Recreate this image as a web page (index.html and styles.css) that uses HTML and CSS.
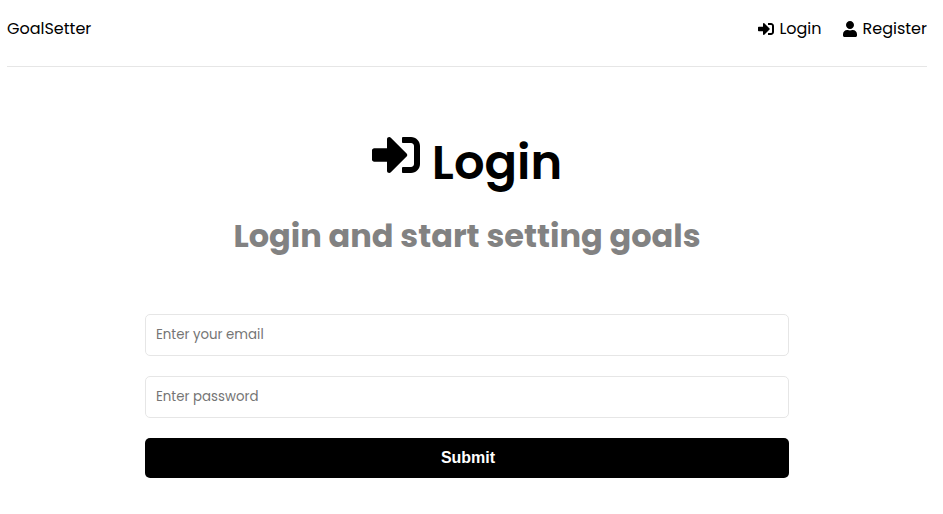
FILE: index.html
```html
<!DOCTYPE html>
<html lang="en">
<head>
<meta charset="utf-8">
<title>GoalSetter</title>
<link rel="stylesheet" href="styles.css">
</head>
<body>
<svg class="sprite" aria-hidden="true">
<symbol id="sign-in" viewBox="0 0 512 512"><path d="M416 448h-84c-6.600 0-12-5.400-12-12v-40c0-6.600 5.400-12 12-12h84c17.700 0 32-14.300 32-32V160c0-17.700-14.300-32-32-32h-84c-6.600 0-12-5.400-12-12V76c0-6.600 5.400-12 12-12h84c53 0 96 43 96 96v192c0 53-43 96-96 96zm-47-209L201 71c-15-15-41-4.500-41 17v96H24c-13.300 0-24 10.700-24 24v96c0 13.300 10.700 24 24 24h136v96c0 21.500 26 32 41 17l168-168c9.300-9.400 9.300-24.600 0-34z"/></symbol>
<symbol id="user" viewBox="0 0 448 512"><path d="M224 256c70.700 0 128-57.300 128-128S294.700 0 224 0 96 57.300 96 128s57.300 128 128 128zm89.600 32h-16.700c-22.200 10.200-46.900 16-72.900 16s-50.600-5.800-72.900-16h-16.700C60.200 288 0 348.200 0 422.400V464c0 26.500 21.500 48 48 48h352c26.500 0 48-21.500 48-48v-41.600c0-74.200-60.200-134.400-134.400-134.400z"/></symbol>
</svg>
<div class="container">
<header class="header">
<a class="brand" href="#">GoalSetter</a>
<nav class="nav">
<a class="link login" href="#"><svg class="icon"><use href="#sign-in"/></svg><span>Login</span></a>
<a class="link register" href="#"><svg class="icon"><use href="#user"/></svg><span>Register</span></a>
</nav>
</header>
<section class="heading">
<h1 class="title"><svg class="title-icon"><use href="#sign-in"/></svg><span class="title-text">Login</span></h1>
<p class="subtitle"><span class="subtitle-text">Login and start setting goals</span></p>
</section>
<form class="form">
<input class="field" type="email" placeholder="Enter your email">
<input class="field" type="password" placeholder="Enter password">
<button class="submit" type="button">Submit</button>
</form>
</div>
</body>
</html>
```
FILE: styles.css
```css
* { box-sizing: border-box; margin: 0; padding: 0; }
body { background: #fff; color: #000; font-family: Poppins, "Open Sans", sans-serif; overflow: hidden; }
.sprite { display: none; }
.container { width: 920px; margin-left: 7px; }
.header { display: flex; justify-content: space-between; height: 67px; padding-top: 17px; border-bottom: 1px solid #e6e6e6; margin-bottom: 60px; }
a { color: #000; text-decoration: none; font-size: 16px; line-height: 24px; height: 24px; }
.nav { display: flex; gap: 20px; }
.link { display: flex; align-items: center; gap: 5px; }
.icon { width: 16px; height: 16px; fill: #000; }
.heading { height: 187px; text-align: center; }
.title { display: flex; justify-content: center; height: 72px; font-size: 48px; font-weight: 600; line-height: 72px; }
.title-icon { width: 48px; height: 48px; margin: 4px 12px 0 0; }
.subtitle { font-size: 32px; font-weight: 700; line-height: 48px; color: #828282; margin-top: 13px; }
.form { display: flex; flex-direction: column; width: 644px; margin: 0 auto; }
.field { height: 42px; margin-bottom: 20px; padding: 0 10px; border: 1px solid #e6e6e6; border-radius: 5px; font: 13.333px Poppins, "Open Sans", sans-serif; }
.field::placeholder { color: #757575; }
.submit { height: 40px; padding-left: 2px; background: #000; color: #fff; border: 0; border-radius: 5px; font: 700 16px "Liberation Sans", Arial, sans-serif; }
```
